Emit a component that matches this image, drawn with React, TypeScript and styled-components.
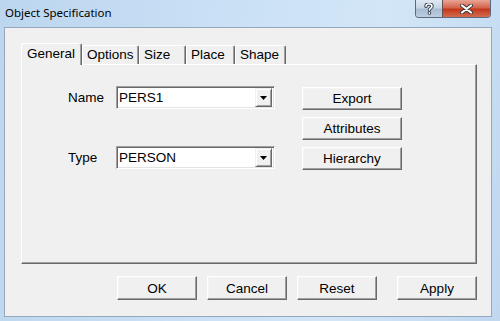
import React from "react";
import styled, { createGlobalStyle } from "styled-components";

const GlobalStyle = createGlobalStyle`
  html, body {
    margin: 0;
    padding: 0;
    width: 500px;
    height: 321px;
    overflow: hidden;
    background: #c3dbf2;
  }
`;

const Frame = styled.div`
  width: 500px;
  height: 321px;
  box-sizing: border-box;
  display: flex;
  flex-direction: column;
  padding: 0 8px 4px 4px;
  background: linear-gradient(100deg, #bcd6ef 0%, #c9e0f5 40%, #d3e6f8 70%, #bfd8f0 100%);
`;

const TitleBar = styled.div`
  height: 27px;
  display: flex;
  align-items: flex-start;
  justify-content: space-between;
  margin-right: -8px;
`;

const Title = styled.span`
  font-family: "Noto Sans", "Open Sans", sans-serif;
  font-size: 11.5px;
  color: #000;
  margin: 5px 0 0 1px;
`;

const Caption = styled.div`
  display: flex;
  margin-right: 9px;
  border: 1px solid #5b6a7c;
  border-top: none;
  border-radius: 0 0 4px 4px;
  overflow: hidden;
  height: 17px;
`;

const CapButton = styled.div<{ $close?: boolean }>`
  width: ${(p) => (p.$close ? "47px" : "26px")};
  height: 17px;
  display: flex;
  align-items: center;
  justify-content: center;
  background: ${(p) =>
    p.$close
      ? "linear-gradient(#e8a596 0%, #d5654c 45%, #c2391d 55%, #d56b4f 100%)"
      : "linear-gradient(#dfe8f2 0%, #c8d5e4 45%, #a9bcd2 55%, #bccde0 100%)"};
  border-left: ${(p) => (p.$close ? "1px solid #6b5050" : "none")};
`;

const Arrow = () => (
  <svg width="7" height="4" viewBox="0 0 7 4">
    <path d="M0 0h7L3.5 4z" fill="#000" />
  </svg>
);

const HelpGlyph = () => (
  <svg width="10" height="12" viewBox="0 0 10 12">
    <path
      d="M2 3.2C2 1.8 3.3 1 5 1s3 0.9 3 2.3c0 1.6-2.6 1.9-2.6 3.8"
      fill="none"
      stroke="#2e3a48"
      strokeWidth="3.4"
      strokeLinecap="round"
    />
    <circle cx="5.4" cy="10" r="1.8" fill="#2e3a48" />
    <path
      d="M2 3.2C2 1.8 3.3 1 5 1s3 0.9 3 2.3c0 1.6-2.6 1.9-2.6 3.8"
      fill="none"
      stroke="#fff"
      strokeWidth="1.6"
      strokeLinecap="round"
    />
    <circle cx="5.4" cy="10" r="0.9" fill="#fff" />
  </svg>
);

const CloseGlyph = () => (
  <svg width="13" height="10" viewBox="0 0 13 10">
    <path d="M2 1.5L11 8.5M11 1.5L2 8.5" stroke="#3a3a3a" strokeWidth="4" strokeLinecap="round" />
    <path d="M2 1.5L11 8.5M11 1.5L2 8.5" stroke="#fff" strokeWidth="2.2" strokeLinecap="round" />
  </svg>
);

const Client = styled.div`
  flex: 1;
  background: #f0f0f0;
  border: 1px solid #97a8bb;
  display: flex;
  flex-direction: column;
  padding: 15px 14px 15px 16px;
  font-family: "Liberation Sans", Arial, sans-serif;
  font-size: 13.5px;
  color: #000;
`;

const TabStrip = styled.div`
  display: flex;
  align-items: flex-end;
  height: 21px;
  position: relative;
  z-index: 1;
`;

const Tab = styled.div<{ $w: number; $active?: boolean }>`
  width: ${(p) => p.$w}px;
  box-sizing: border-box;
  height: ${(p) => (p.$active ? "22px" : "19px")};
  margin-bottom: ${(p) => (p.$active ? "-1px" : "0")};
  padding: ${(p) => (p.$active ? "2px 0 0 5px" : "1px 0 0 4px")};
  background: #f0f0f0;
  border-top: 1px solid #fff;
  border-left: 1px solid #fff;
  border-right: 1px solid #696969;
  box-shadow: inset -1px 0 0 #a0a0a0;
  border-radius: 2px 2px 0 0;
  white-space: nowrap;
`;

const Panel = styled.div`
  height: 200px;
  box-sizing: border-box;
  border-top: 1px solid #fff;
  border-left: 1px solid #fff;
  border-right: 1px solid #696969;
  border-bottom: 1px solid #696969;
  box-shadow: inset -1px -1px 0 #a0a0a0;
  display: flex;
  padding: 21px 0 0 46px;
`;

const Fields = styled.div`
  display: flex;
  flex-direction: column;
  gap: 37px;
`;

const FieldRow = styled.div`
  display: flex;
  align-items: center;
`;

const Label = styled.span`
  width: 48px;
`;

const Combo = styled.div`
  width: 159px;
  height: 23px;
  box-sizing: border-box;
  background: #fff;
  border-top: 1px solid #a0a0a0;
  border-left: 1px solid #a0a0a0;
  border-right: 1px solid #fff;
  border-bottom: 1px solid #fff;
  box-shadow: inset 1px 1px 0 #696969, inset -1px -1px 0 #e3e3e3;
  display: flex;
  align-items: center;
  padding: 2px;
`;

const ComboText = styled.span`
  flex: 1;
`;

const DropButton = styled.div`
  width: 17px;
  height: 19px;
  box-sizing: border-box;
  background: #f0f0f0;
  border-top: 1px solid #f0f0f0;
  border-left: 1px solid #f0f0f0;
  border-right: 1px solid #696969;
  border-bottom: 1px solid #696969;
  box-shadow: inset 1px 1px 0 #fff, inset -1px -1px 0 #a0a0a0;
  display: flex;
  align-items: center;
  justify-content: center;
`;

const Side = styled.div`
  display: flex;
  flex-direction: column;
  gap: 7px;
  margin-left: 27px;
  padding-top: 1px;
`;

const Button = styled.div<{ $w: number; $gap?: number }>`
  width: ${(p) => p.$w}px;
  height: 23px;
  margin-left: ${(p) => p.$gap ?? 0}px;
  box-sizing: border-box;
  background: #f0f0f0;
  border-top: 1px solid #fff;
  border-left: 1px solid #fff;
  border-right: 1px solid #696969;
  border-bottom: 1px solid #696969;
  box-shadow: inset -1px -1px 0 #a0a0a0, inset 1px 1px 0 #f4f4f4;
  display: flex;
  align-items: center;
  justify-content: center;
`;

const ButtonRow = styled.div`
  display: flex;
  justify-content: flex-end;
  margin-top: 12px;
  & > div {
    height: 24px;
  }
`;

const ComboBox = ({ value }: { value: string }) => (
  <Combo>
    <ComboText>{value}</ComboText>
    <DropButton>
      <Arrow />
    </DropButton>
  </Combo>
);

const tabs = [
  { label: "General", w: 61, active: true },
  { label: "Options", w: 57 },
  { label: "Size", w: 47 },
  { label: "Place", w: 49 },
  { label: "Shape", w: 51 },
];

const App: React.FC = () => {
  return (
    <Frame>
      <GlobalStyle />
      <TitleBar>
        <Title>Object Specification</Title>
        <Caption>
          <CapButton>
            <HelpGlyph />
          </CapButton>
          <CapButton $close>
            <CloseGlyph />
          </CapButton>
        </Caption>
      </TitleBar>
      <Client>
        <TabStrip>
          {tabs.map((t) => (
            <Tab key={t.label} $w={t.w} $active={t.active}>
              {t.label}
            </Tab>
          ))}
        </TabStrip>
        <Panel>
          <Fields>
            <FieldRow>
              <Label>Name</Label>
              <ComboBox value="PERS1" />
            </FieldRow>
            <FieldRow>
              <Label>Type</Label>
              <ComboBox value="PERSON" />
            </FieldRow>
          </Fields>
          <Side>
            <Button $w={100}>Export</Button>
            <Button $w={100}>Attributes</Button>
            <Button $w={100}>Hierarchy</Button>
          </Side>
        </Panel>
        <ButtonRow>
          <Button $w={80}>OK</Button>
          <Button $w={80} $gap={10}>Cancel</Button>
          <Button $w={80} $gap={10}>Reset</Button>
          <Button $w={80} $gap={20}>Apply</Button>
        </ButtonRow>
      </Client>
    </Frame>
  );
};

export default App;
